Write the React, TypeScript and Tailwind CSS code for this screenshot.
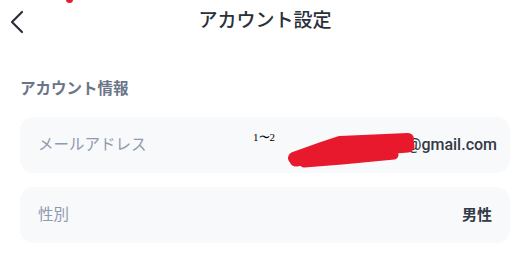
import React from "react";

const jp = "font-['Inter','Noto_Sans_CJK_JP',sans-serif]";

function BackIcon() {
  return (
    <svg width="14" height="24" viewBox="0 0 14 24" fill="none">
      <polyline
        points="12,2 2,12 12,22"
        stroke="#2b303b"
        strokeWidth="2.2"
        strokeLinecap="round"
        strokeLinejoin="round"
      />
    </svg>
  );
}

function Scribble() {
  return (
    <svg
      className="absolute left-[262px] top-[12px]"
      width="135"
      height="42"
      viewBox="0 0 135 42"
      fill="none"
    >
      <g stroke="#e8192c" strokeLinecap="round" strokeLinejoin="round">
        <path d="M12 29 L40 19 L58 13 L126 10" strokeWidth="12" />
        <path d="M14 31 Q60 22 126 17" strokeWidth="13" />
        <path d="M22 34 L60 31 L112 26" strokeWidth="9" />
        <path d="M48 17 L56 30" strokeWidth="10" />
      </g>
    </svg>
  );
}

type Row = { label: string; value: string };

function InfoRow({ label, value, children }: Row & { children?: React.ReactNode }) {
  return (
    <div className="relative flex h-[56px] items-center justify-between rounded-[14px] bg-[#f8f9fb] pl-[18px] pr-[18px]">
      <span className={`${jp} text-[15.5px] text-[#8f9aae]`}>{label}</span>
      <span className={`${jp} text-[15px] font-semibold text-[#333a46]`}>{value}</span>
      {children}
    </div>
  );
}

export default function App() {
  return (
    <div className="relative h-[275px] w-[530px] overflow-hidden bg-white">
      <div className="absolute left-[66px] top-[-4px] h-[7px] w-[7px] rounded-full bg-[#e8192c]" />

      <header className="grid h-[42px] grid-cols-[1fr_auto_1fr] items-center">
        <div className="pl-[10px] pt-[1px]">
          <BackIcon />
        </div>
        <h1 className={`${jp} text-[19px] font-medium text-[#2b303b]`}>アカウント設定</h1>
        <div />
      </header>

      <section className="px-[20px] pt-[36px]">
        <h2 className={`${jp} text-[15.5px] font-semibold leading-[22px] text-[#6b7588]`}>
          アカウント情報
        </h2>

        <div className="mt-[17px] flex flex-col gap-[14px]">
          <div className="relative flex h-[56px] items-center justify-between rounded-[14px] bg-[#f8f9fb] pl-[18px] pr-[13px]">
            <span className={`${jp} text-[15.5px] text-[#8f9aae]`}>メールアドレス</span>
            <span className="font-['Roboto',sans-serif] text-[16px] font-medium text-[#333a46]">
              xxxxxxxx@gmail.com
            </span>
            <span className="absolute left-[233px] top-[12px] font-['Liberation_Serif',serif] text-[11px] text-black">
              1〜2
            </span>
            <Scribble />
          </div>
          <InfoRow label="性別" value="男性" />
        </div>
      </section>
    </div>
  );
}
